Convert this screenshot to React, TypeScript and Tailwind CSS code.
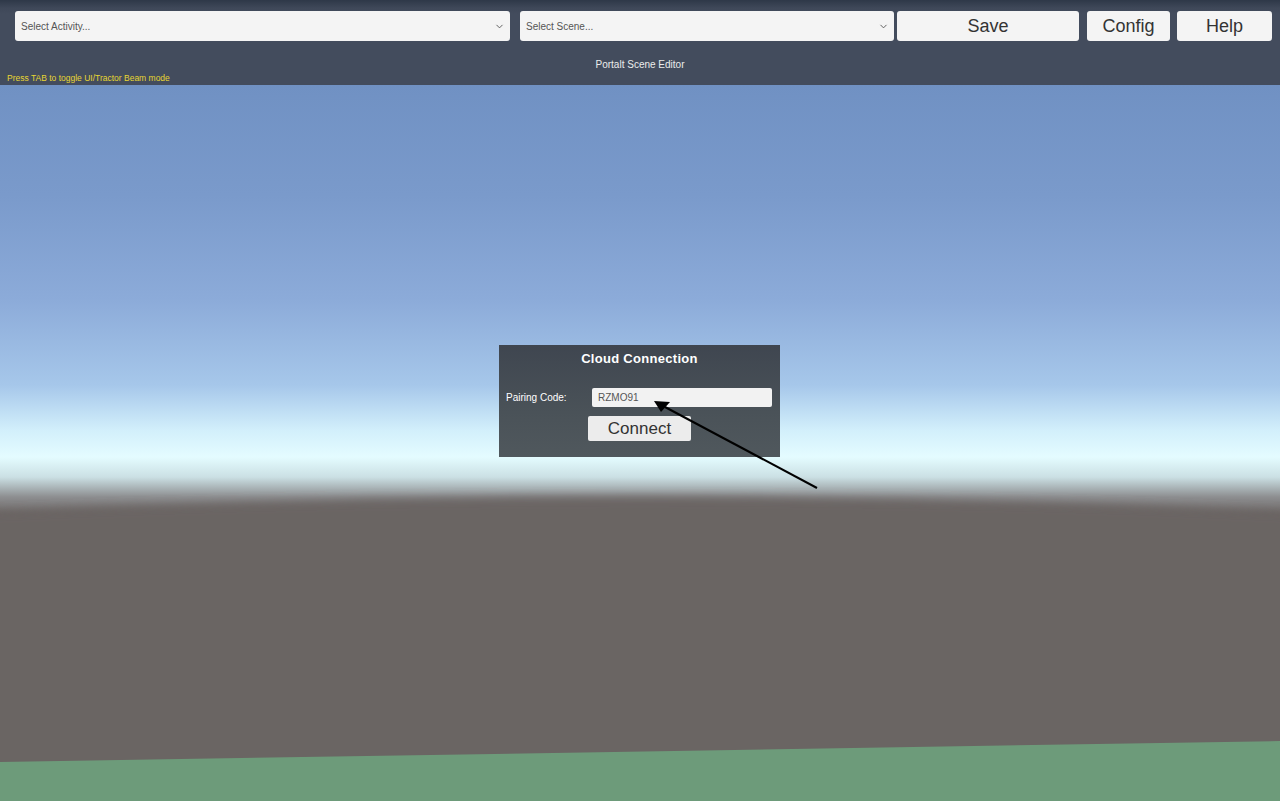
import { ChevronDown } from "lucide-react";

// Unity-ish editor chrome over a 3D viewport (sky, ground, green plane).

function Dropdown({ label, className }: { label: string; className: string }) {
  return (
    <div
      className={`flex items-center justify-between h-[30px] bg-[#f4f4f4] rounded-[3px] pl-[6px] pr-[5px] ${className}`}
    >
      <span className="text-[10px] text-[#555]">{label}</span>
      <ChevronDown className="size-[11px] text-[#555]" strokeWidth={2} />
    </div>
  );
}

function Btn({ label, className }: { label: string; className: string }) {
  return (
    <div
      className={`flex items-center justify-center h-[30px] bg-[#f4f4f4] rounded-[3px] text-[18px] text-[#333] ${className}`}
    >
      {label}
    </div>
  );
}

export default function App() {
  return (
    <div className="w-[1280px] h-[801px] flex flex-col overflow-hidden font-['Liberation_Sans',Arial,sans-serif]">
      {/* toolbar */}
      <header className="h-[85px] shrink-0 flex flex-col bg-[linear-gradient(180deg,#2e3848_0px,#3f4859_8px,#434c5d_14px,#434c5d_100%)]">
        <div className="flex mt-[11px]">
          <Dropdown label="Select Activity..." className="ml-[15px] w-[495px]" />
          <Dropdown label="Select Scene..." className="ml-[10px] w-[374px]" />
          <Btn label="Save" className="ml-[3px] w-[182px]" />
          <Btn label="Config" className="ml-[8px] w-[83px]" />
          <Btn label="Help" className="ml-[7px] w-[95px]" />
        </div>
        <div className="mt-[17px] text-center text-[10px] leading-[13px] text-[#ececec]">
          Portalt Scene Editor
        </div>
        <div className="mt-[2px] pl-[7px] text-[8.5px] leading-[11px] text-[#e8d632]">
          Press TAB to toggle UI/Tractor Beam mode
        </div>
      </header>

      {/* viewport */}
      <main className="relative flex-1 bg-[linear-gradient(180deg,#7091c3_0px,#7a9acb_110px,#8cabd9_215px,#a6c7ea_300px,#d2effb_345px,#e4fcff_372px,#cbe0e4_392px,#8d8e90_412px,#6b6563_430px,#686260_716px)]">
        <svg
          className="absolute inset-0 w-full h-full"
          viewBox="0 0 1280 716"
          preserveAspectRatio="none"
        >
          <defs>
            <filter id="haze" x="-5%" y="-5%" width="110%" height="110%">
              <feGaussianBlur stdDeviation="5" />
            </filter>
          </defs>
          <path
            d="M-20 428 Q640 396 1300 428 L1300 740 L-20 740 Z"
            fill="#6b6563"
            filter="url(#haze)"
          />
          <path d="M0 677 L1280 656 L1280 716 L0 716 Z" fill="#6d9b7a" />
        </svg>

        {/* cloud connection panel */}
        <div className="absolute left-[499px] top-[260px] w-[281px] h-[112px] flex flex-col bg-[linear-gradient(180deg,#3f4650,#4a5258_60%,#50585d)]">
          <div className="pt-[6px] text-center text-[13px] font-bold leading-[16px] text-white tracking-[0.3px]">
            Cloud Connection
          </div>
          <div className="flex items-center mt-[21px] pl-[7px]">
            <span className="w-[86px] text-[10px] text-white">Pairing Code:</span>
            <div className="w-[180px] h-[19px] bg-[#f2f2f2] rounded-[2px] flex items-center pl-[6px] text-[10px] text-[#555]">
              RZMO91
            </div>
          </div>
          <div className="flex mt-[9px] pl-[89px]">
            <div className="w-[103px] h-[25px] bg-[#ececec] rounded-[2px] flex items-center justify-center text-[17px] text-[#333]">
              Connect
            </div>
          </div>
        </div>

        {/* annotation arrow */}
        <svg className="absolute inset-0 w-full h-full pointer-events-none" viewBox="0 0 1280 716">
          <line x1="817" y1="403" x2="665" y2="322" stroke="#000" strokeWidth="2" />
          <polygon points="654,316 670,317 661,327" fill="#000" />
        </svg>
      </main>
    </div>
  );
}
